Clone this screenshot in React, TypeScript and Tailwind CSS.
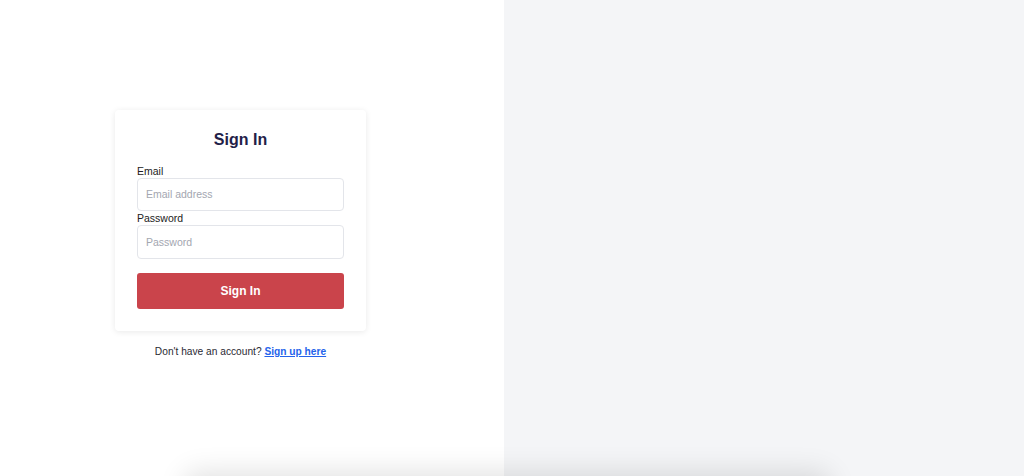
import React from "react";

export default function App() {
  return (
    <div className="w-[1024px] bg-white" style={{ fontFamily: '"Liberation Sans", Arial, sans-serif' }}>
      <div className="flex h-[476px] w-full">
        <div className="flex h-full w-[504px] flex-col justify-center bg-white pl-[115px] pb-[8px]">
          <div className="flex w-[251px] flex-col items-center">
            <div className="w-full rounded-[4px] bg-white px-[22px] pt-[20px] pb-[22px] shadow-[0_1px_6px_rgba(0,0,0,0.09)]">
              <h1 className="text-center text-[16px] font-bold leading-[20px] text-[#1f2148]">Sign In</h1>
              <label className="mt-[14px] block text-[10.5px] leading-[14px] text-[#222]">Email</label>
              <input
                type="email"
                placeholder="Email address"
                className="block h-[33px] w-full rounded-[4px] border border-[#e3e5ea] bg-white px-[8px] text-[10.5px] text-[#222] outline-none placeholder:text-[#a3a6b0]"
              />
              <label className="block text-[10.5px] leading-[14px] text-[#222]">Password</label>
              <input
                type="password"
                placeholder="Password"
                className="block h-[34px] w-full rounded-[4px] border border-[#e3e5ea] bg-white px-[8px] text-[10.5px] text-[#222] outline-none placeholder:text-[#a3a6b0]"
              />
              <button className="mt-[14px] flex h-[36px] w-full items-center justify-center rounded-[3px] bg-[#ca444b] text-[12px] font-bold text-white">
                Sign In
              </button>
            </div>
            <p className="mt-[14px] text-center text-[10.2px] leading-[14px] text-[#2a2a33]">
              Don't have an account?{" "}
              <a href="#" className="font-bold text-[#2563eb] underline">
                Sign up here
              </a>
            </p>
          </div>
        </div>
        <div className="h-full flex-1 bg-[#f4f5f7]" />
      </div>
      <div className="relative ml-[185px] h-[80px] w-[645px] rounded-[10px] bg-white shadow-[0_-4px_28px_rgba(0,0,0,0.12)]" />
    </div>
  );
}
